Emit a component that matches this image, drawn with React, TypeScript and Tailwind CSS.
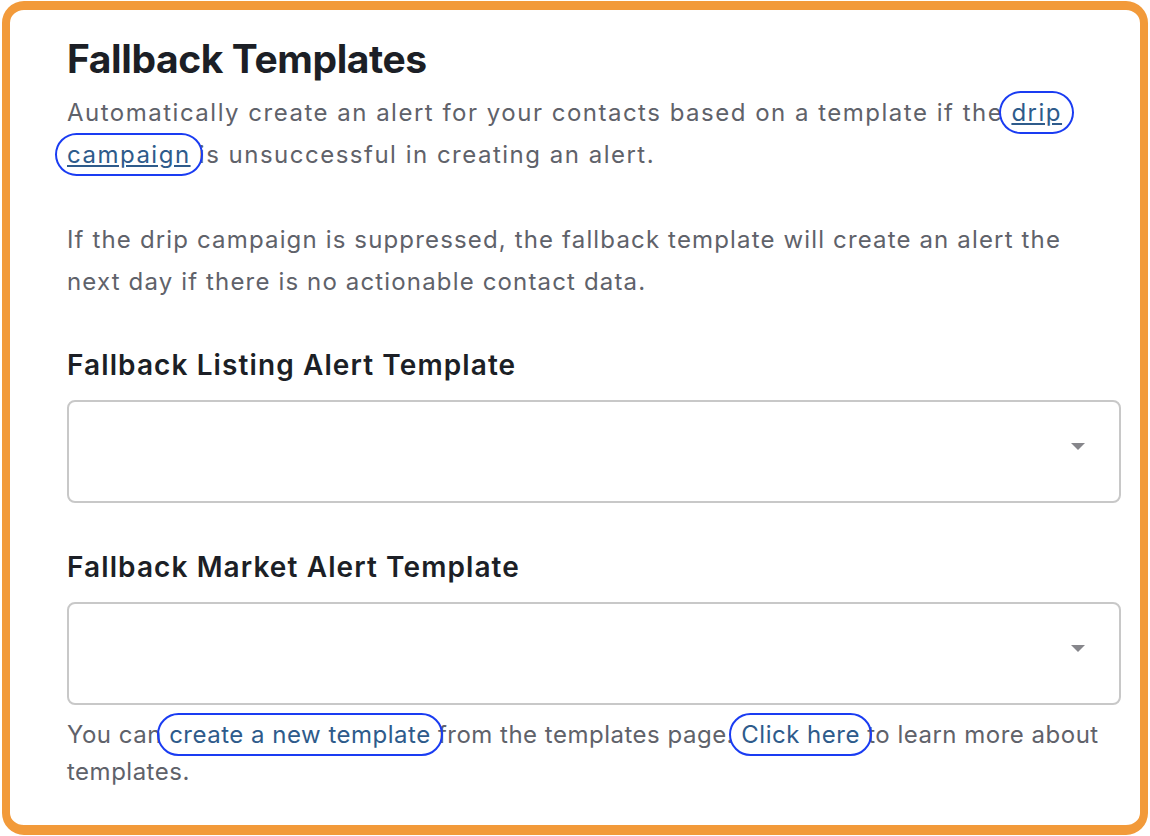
const ring =
  "rounded-full outline-2 outline-[#1a3cf2] px-[10px] -mx-[10px] py-[5px] box-decoration-clone";

function TemplateSelect({ label }: { label: string }) {
  return (
    <div className="flex flex-col">
      <label className="text-[28px] leading-[36px] font-semibold text-[#1c1f26] tracking-[1.1px]">
        {label}
      </label>
      <div className="mt-[17px] h-[103px] border-2 border-[#c8c8c8] rounded-[8px] flex items-center justify-end pr-[34px] pb-[10px]">
        <svg width="14" height="7" viewBox="0 0 14 7">
          <path d="M0 0 L14 0 L7 7 Z" fill="#86868b" />
        </svg>
      </div>
    </div>
  );
}

export default function App() {
  return (
    <div
      className="w-[1150px] h-[836px] bg-white pt-[1px] pl-[2px]"
      style={{ fontFamily: "Inter, 'Noto Sans', sans-serif" }}
    >
      <div className="w-[1146px] h-[834px] border-[8px] border-t-[9px] border-b-[10px] border-[#f29a3a] rounded-[22px] pl-[57px] pr-[19px] pt-[25px]">
        <h1 className="text-[39px] leading-[48px] font-bold text-[#1c1f26] tracking-[-0.4px]">
          Fallback Templates
        </h1>
        <p className="mt-[9px] text-[24px] leading-[42px] text-[#5f626a] tracking-[1.5px]">
          Automatically create an alert for your contacts based on a template if the{" "}
          <a href="#" className={`${ring} underline text-[#2e5b8b]`}>
            drip campaign
          </a>{" "}
          is unsuccessful in creating an alert.
        </p>
        <p className="mt-[43px] text-[24px] leading-[42px] text-[#5f626a] tracking-[1.15px]">
          If the drip campaign is suppressed, the fallback template will create an alert the next
          day if there is no actionable contact data.
        </p>
        <div className="mt-[44px] flex flex-col gap-[46px]">
          <TemplateSelect label="Fallback Listing Alert Template" />
          <TemplateSelect label="Fallback Market Alert Template" />
        </div>
        <p className="mt-[11px] text-[24px] leading-[37px] text-[#5f626a] tracking-[0.5px]">
          You can{" "}
          <a href="#" className={`${ring} text-[#2e5b8b]`}>
            create a new template
          </a>{" "}
          from the templates page.{" "}
          <a href="#" className={`${ring} text-[#2e5b8b]`}>
            Click here
          </a>{" "}
          to learn more about templates.
        </p>
      </div>
    </div>
  );
}
